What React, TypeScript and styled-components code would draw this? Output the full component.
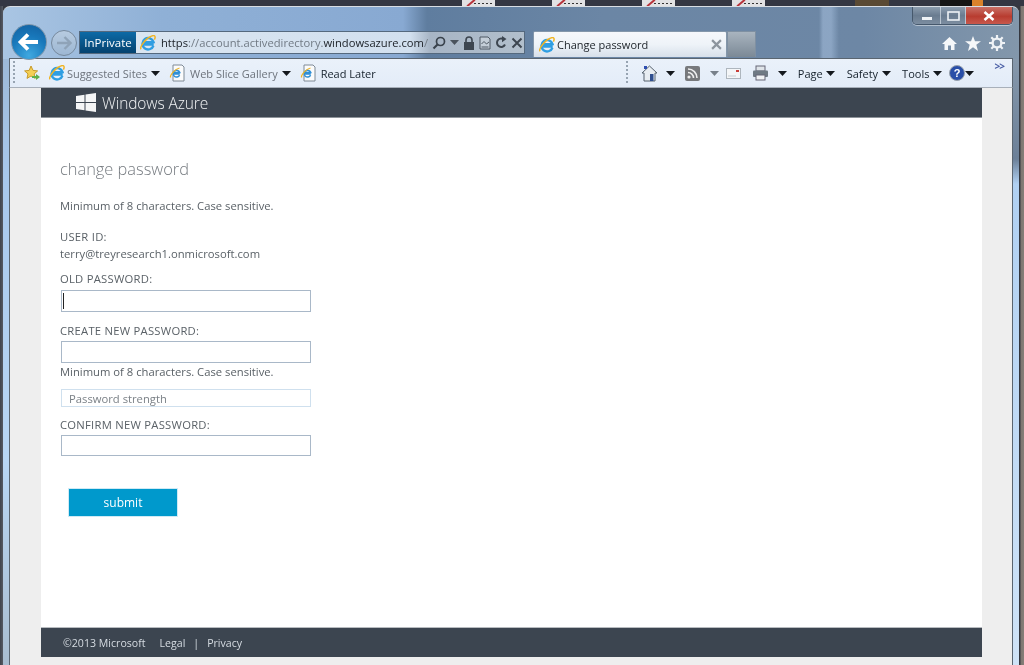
import React from "react";
import styled, { createGlobalStyle } from "styled-components";

const Global = createGlobalStyle`
  html, body { margin: 0; padding: 0; background: #3a3d48; }
  * { box-sizing: border-box; }
`;

const sans = `"Open Sans", "Noto Sans", "Liberation Sans", sans-serif`;

const Desktop = styled.div`
  width: 1024px; height: 665px; overflow: hidden; display: flex; flex-direction: column;
  background: linear-gradient(90deg, #3f434c 0, #565a63 3px, #34373f 3px, #34373f 1020px, #7d7670 1021px, #857e78 1024px);
  font-family: ${sans};
  filter: blur(0.3px);
`;
const DesktopStrip = styled.div`
  height: 6px; flex: none; display: flex; padding-left: 462px; gap: 57px;
  background: #343743;
`;
const Thumb = styled.div`
  width: 33px; height: 6px; flex: none; background: #e2e2e4; position: relative; overflow: hidden;
  &::before { content: ""; position: absolute; left: 12px; top: 3px; width: 18px; height: 1px; background: repeating-linear-gradient(90deg, #333 0 2px, transparent 2px 4px); }
  &::after { content: ""; position: absolute; left: 4px; top: 2px; width: 10px; height: 2px; background: #b8323a; transform: rotate(-40deg); }
`;
const Scrap = styled.div<{ $w: number; $ml: number; $c: string }>`
  width: ${p => p.$w}px; flex: none; margin-left: ${p => p.$ml}px; height: 6px; background: ${p => p.$c};
`;
const Window = styled.div`
  flex: 1; margin: 0 5px 0 3px; display: flex; flex-direction: column; min-height: 0;
  border-radius: 7px 7px 0 0; border-top: 1px solid #d8dde3; position: relative;
  background:
    linear-gradient(90deg, transparent 0, transparent 816px, rgba(170,195,225,.5) 820px, rgba(170,195,225,.5) 828px, transparent 836px),
    linear-gradient(90deg, #a9c5e3 0, #8fb0d6 160px, #88a9d2 400px, #5f7d9f 424px, #6b86a5 600px, #6d87a5 860px, #8397ab 1016px);
`;
const BottomGlow = styled.div`
  position: absolute; inset: 52px 0 0 0;
  background:
    linear-gradient(180deg, #9db9d8 0, #a8c8ec 120px, #b8d6f4 400px, #a9bdd0 100%) left / 50% 100% no-repeat,
    linear-gradient(180deg, #8698ab 0, #6c8098 100px, #b0d0f2 125px, #cfe3f7 100%) right / 50% 100% no-repeat;
`;
const ChromeRow = styled.div`
  height: 51px; flex: none; display: flex; align-items: flex-start; padding-left: 8px; position: relative;
`;
const Caption = styled.div`
  position: absolute; top: 0; right: 6px; width: 101px; height: 18px; display: flex;
  border: 1px solid #46586c; border-top: none; border-radius: 0 0 5px 5px; overflow: hidden;
  box-shadow: 0 1px 0 rgba(255,255,255,.45);
`;
const CapBtn = styled.div<{ $w: number; $red?: boolean }>`
  width: ${p => p.$w}px; display: flex; align-items: center; justify-content: center;
  border-right: 1px solid rgba(230,238,245,.6);
  background: ${p => p.$red
    ? "linear-gradient(180deg,#c97066 0,#b83c30 55%,#c8584c 100%)"
    : "linear-gradient(180deg,#8c9daf 0,#6a7c90 50%,#7c8da0 100%)"};
  &:last-child { border-right: none; }
`;
const BackBtn = styled.div`
  width: 36px; height: 36px; margin-top: 17px; border-radius: 50%; flex: none; display: flex; align-items: center; justify-content: center;
  background: radial-gradient(circle at 50% 90%, #3fa8e0 0, #1878bb 55%, #125f9f 100%);
  border: 1px solid #7f96ab; position: relative; z-index: 1;
`;
const FwdBtn = styled.div`
  width: 26px; height: 26px; margin: 23px 0 0 4px; border-radius: 50%; flex: none; display: flex; align-items: center; justify-content: center;
  background: linear-gradient(180deg, #b7cbe0, #9db7d3); border: 1px solid #76899d;
`;
const Address = styled.div`
  width: 446px; height: 23px; margin: 24px 0 0 2px; flex: none; display: flex; align-items: center;
  border: 1px solid #55697e; overflow: hidden;
  background: linear-gradient(90deg, #dbe6f1 0, #d2e0ef 330px, #a7b5c5 350px, #b2bfcc 100%);
`;
const Private = styled.div`
  width: 56px; height: 100%; flex: none; display: flex; align-items: center; justify-content: center;
  background: linear-gradient(180deg, #0d6aa6, #04426f); color: #fff; font-size: 11.5px;
`;
const IconGap = styled.span`
  width: 4px; flex: none;
`;
const Url = styled.div`
  width: 267px; margin-left: 5px; overflow: hidden; white-space: nowrap; font-size: 11.2px; color: #717a84; flex: none;
  & b { font-weight: 400; color: #1a1f25; }
`;
const AddrIcons = styled.div`
  display: flex; align-items: center; gap: 4px; margin-left: 4px;
`;
const Tab = styled.div`
  width: 194px; height: 26px; margin: 24px 0 0 8px; flex: none; display: flex; align-items: center; padding: 0 4px 0 5px;
  background: linear-gradient(180deg, #f6f8fb 0, #eef3f8 50%, #d7e0ea 100%);
  border: 1px solid #8497aa; border-bottom: none; border-radius: 2px 2px 0 0;
`;
const TabTitle = styled.span`
  font-size: 11px; color: #1c2228; margin-left: 2px; flex: 1;
`;
const NewTab = styled.div`
  width: 29px; height: 26px; margin-top: 24px; flex: none;
  background: linear-gradient(180deg, #a9b4bf, #7b8996); border: 1px solid #7f90a2; border-bottom: none;
`;
const RightIcons = styled.div`
  position: absolute; top: 28px; right: 14px; display: flex; gap: 8px; align-items: center;
`;
const Toolbar = styled.div`
  height: 30px; flex: none; margin: 0 6px; display: flex; align-items: center; position: relative;
  background: linear-gradient(180deg, #eaf1fa, #e3ecf8);
  border: 1px solid #5a6570; border-bottom-color: #a8b0ba;
  font-size: 11px; color: #1b2430;
`;
const Grip = styled.div<{ $ml: number }>`
  width: 2px; height: 24px; margin-left: ${p => p.$ml}px; flex: none;
  background: repeating-linear-gradient(180deg, #97a4b2 0 2px, transparent 2px 4px);
`;
const Item = styled.span<{ $ml: number; $dim?: boolean }>`
  margin-left: ${p => p.$ml}px; flex: none; display: inline-flex; align-items: center;
  color: ${p => (p.$dim ? "#6d737c" : "#15202b")}; white-space: nowrap;
`;
const More = styled.span`
  position: absolute; right: 8px; top: 1px; font-size: 10px; line-height: 12px; color: #4a5fa5; font-weight: 700; letter-spacing: -1px;
`;
const PageArea = styled.div`
  flex: 1; min-height: 0; margin: 0 6px; background: #eeeeee; padding: 0 30px 8px 31px; display: flex; flex-direction: column; position: relative;
  border-left: 1px solid #5a6570; border-right: 1px solid #5a6570;
`;
const Header = styled.header`
  height: 30px; flex: none; background: #3c4550; border-bottom: 1px solid #8e949a; display: flex; align-items: center; padding-left: 35px; color: #f2f4f5;
`;
const Brand = styled.span`
  font-size: 15.5px; margin-left: 6px; font-weight: 300; letter-spacing: -.1px;
`;
const Main = styled.main`
  flex: 1; background: #fff; padding: 40px 0 0 19px; display: flex; flex-direction: column; align-items: flex-start; color: #5a6167; font-size: 11.25px;
`;
const Title = styled.h1`
  margin: 0 0 18px; font-size: 16.4px; line-height: 22px; font-weight: 300; color: #767b80;
`;
const Line = styled.div<{ $mt?: number; $caps?: boolean }>`
  line-height: 16px; margin-top: ${p => p.$mt ?? 0}px; white-space: nowrap; letter-spacing: ${p => (p.$caps ? ".25px" : "0")};
`;
const Field = styled.div<{ $mt: number; $h: number; $weak?: boolean }>`
  width: 250px; height: ${p => p.$h}px; margin: ${p => p.$mt}px 0 0 1px; background: #fff; display: flex; align-items: center;
  border: 1px solid ${p => (p.$weak ? "#cfe0ee" : "#a9b8c8")}; padding-left: 7px; color: #7b8187;
`;
const Caret = styled.div`
  width: 1px; height: 16px; background: #222; margin-left: -6px;
`;
const Submit = styled.button`
  width: 110px; height: 29px; margin: 32px 0 0 8px; background: #0099cc; border: 1px solid #cfeaf5; color: #fff; font: 400 12px ${sans}; padding: 0;
`;
const Footer = styled.footer`
  height: 30px; flex: none; background: #3c4550; border-top: 1px solid #b8bcc0; display: flex; align-items: center; padding-left: 22px; color: #d6dce2; font-size: 10.6px;
`;
const FootItem = styled.span<{ $ml?: number }>`
  margin-left: ${p => p.$ml ?? 0}px;
`;

const IeIcon = ({ s = 16 }: { s?: number }) => (
  <svg width={s} height={s} viewBox="1 1 14 14" style={{ flex: "none" }}>
    <path d="M12.8 10.4A5 5 0 1 1 12.9 7.2H4.4M4.3 9.3H13" fill="none" stroke="#2f9ee2" strokeWidth="2" />
    <path d="M2 13.5C.2 12 5.8 4 11 2c3-1.2 4 .2 2.6 3" fill="none" stroke="#f0b422" strokeWidth="1.3" />
  </svg>
);
const PageIe = () => (
  <svg width="16" height="18" viewBox="0 0 16 18" style={{ flex: "none" }}>
    <path d="M4 1h9l2 2v14H4z" fill="#fafbfc" stroke="#7f8a96" />
    <path d="M10.6 11.2A3.4 3.4 0 1 1 10.8 8.6H4.8M4.8 10H10.8" fill="none" stroke="#2f8fd6" strokeWidth="1.5" />
    <path d="M1.5 13.5C1 11 6 5 10.5 4" fill="none" stroke="#f0b422" strokeWidth="1.2" />
  </svg>
);
const Down = ({ c = "#14181d" }: { c?: string }) => (
  <svg width="9" height="5" viewBox="0 0 9 5" style={{ flex: "none" }}><path d="M0 0h9L4.5 5z" fill={c} /></svg>
);

export default function App() {
  return (
    <Desktop>
      <Global />
      <DesktopStrip>
        <Thumb /><Thumb /><Thumb /><Thumb />
        <Scrap $w={34} $ml={33} $c="#5a4a34" />
        <Scrap $w={32} $ml={-6} $c="#151515" />
        <Scrap $w={11} $ml={-57} $c="#d9822b" />
      </DesktopStrip>
      <Window>
        <BottomGlow />
        <ChromeRow>
          <BackBtn>
            <svg width="24" height="20" viewBox="0 0 24 20"><path d="M11 2.5 3.5 10l7.5 7.5M4 10h17" fill="none" stroke="#fff" strokeWidth="3.8" strokeLinejoin="miter" /></svg>
          </BackBtn>
          <FwdBtn>
            <svg width="18" height="16" viewBox="0 0 18 16"><path d="M9.5 2 15.5 8l-6 6M15 8H2" fill="none" stroke="#8fa3b8" strokeWidth="2.4" /></svg>
          </FwdBtn>
          <Address>
            <Private>InPrivate</Private>
            <IconGap />
            <IeIcon />
            <Url><b>https</b>://account.activedirectory.<b>windowsazure.com</b>/</Url>
            <AddrIcons>
              <svg width="14" height="14" viewBox="0 0 14 14"><circle cx="8.5" cy="5.5" r="4" fill="none" stroke="#39424c" strokeWidth="1.7" /><path d="M5.5 8.5 1.5 12.5" stroke="#39424c" strokeWidth="2.2" /></svg>
              <Down c="#4a535d" />
              <svg width="12" height="14" viewBox="0 0 12 14"><path d="M3 6V4a3 3 0 0 1 6 0v2" fill="none" stroke="#3d4650" strokeWidth="1.6" /><rect x="1" y="6" width="10" height="8" fill="#3d4650" /></svg>
              <svg width="12" height="14" viewBox="0 0 12 14"><path d="M1 1h8l2 2v10H1z" fill="#c4ced8" stroke="#4f5964" /><path d="M2.5 8 5 5.5 7.5 8 10 6M2.5 11h7" fill="none" stroke="#4f5964" /></svg>
              <svg width="12" height="13" viewBox="0 0 12 13"><path d="M10 8.5A4.2 4.2 0 1 1 8.5 3.2" fill="none" stroke="#3d4650" strokeWidth="2" /><path d="M7 0v6.2L11.5 3z" fill="#3d4650" /></svg>
              <svg width="12" height="12" viewBox="0 0 12 12"><path d="M1.5 1.5l9 9M10.5 1.5l-9 9" stroke="#3d4650" strokeWidth="2" /></svg>
            </AddrIcons>
          </Address>
          <Tab>
            <IeIcon />
            <TabTitle>Change password</TabTitle>
            <svg width="11" height="11" viewBox="0 0 10 10"><path d="M1 1l8 8M9 1l-8 8" stroke="#8d959e" strokeWidth="2" /></svg>
          </Tab>
          <NewTab />
          <Caption>
            <CapBtn $w={29}><svg width="12" height="10" viewBox="0 0 12 10"><rect x="1" y="6" width="10" height="3" fill="#eef2f6" /></svg></CapBtn>
            <CapBtn $w={25}><svg width="13" height="10" viewBox="0 0 13 10"><rect x="1" y="1" width="11" height="8" fill="none" stroke="#eef2f6" strokeWidth="1.6" /></svg></CapBtn>
            <CapBtn $w={47} $red><svg width="12" height="10" viewBox="0 0 12 10"><path d="M1.5 1l9 8M10.5 1l-9 8" stroke="#fff" strokeWidth="2.6" /></svg></CapBtn>
          </Caption>
          <RightIcons>
            <svg width="15" height="15" viewBox="0 0 15 15"><path d="M7.5 1 0 8h2.5v6h3.5V9.5h3V14h3.5V8H15z" fill="#f5f7f9" /></svg>
            <svg width="16" height="15" viewBox="0 0 16 15"><path d="M8 0l2 5.3h6l-4.7 3.5L13 15 8 11.3 3 15l1.7-6.2L0 5.3h6z" fill="#f5f7f9" /></svg>
            <svg width="16" height="16" viewBox="0 0 16 16"><circle cx="8" cy="8" r="4.4" fill="none" stroke="#f0f3f6" strokeWidth="2.4" /><path d="M8 0v3M8 13v3M0 8h3M13 8h3M2.3 2.3l2.2 2.2M11.5 11.5l2.2 2.2M13.7 2.3l-2.2 2.2M4.5 11.5l-2.2 2.2" stroke="#f0f3f6" strokeWidth="2.2" /></svg>
          </RightIcons>
        </ChromeRow>
        <Toolbar>
          <Grip $ml={3} />
          <Item $ml={9}>
            <svg width="16" height="16" viewBox="0 0 16 16"><path d="M7 1l2 4.4 4.6.5-3.4 3 1 4.5L7 11 3 13.4l1-4.5L.6 5.9l4.6-.5z" fill="#f4cf55" stroke="#c79a2a" /><path d="M8 11h4V9l4 3-4 3v-2H8z" fill="#5fb04a" /></svg>
          </Item>
          <Item $ml={9}><IeIcon /></Item>
          <Item $ml={2} $dim>Suggested Sites</Item>
          <Item $ml={4}><Down /></Item>
          <Item $ml={9}><PageIe /></Item>
          <Item $ml={5} $dim>Web Slice Gallery</Item>
          <Item $ml={4}><Down /></Item>
          <Item $ml={9}><PageIe /></Item>
          <Item $ml={5}>Read Later</Item>
          <Grip $ml={250} />
          <Item $ml={13}>
            <svg width="17" height="17" viewBox="0 0 17 17"><path d="M8.5 1 1 8h2v8h11V8h2z" fill="#e8edf2" stroke="#56626e" /><rect x="9" y="9" width="3.5" height="7" fill="#2f4f8f" /><path d="M3 1h3v3H3z" fill="#2f4fb0" /></svg>
          </Item>
          <Item $ml={8}><Down /></Item>
          <Item $ml={10}>
            <svg width="15" height="15" viewBox="0 0 15 15"><rect width="15" height="15" rx="2" fill="#77797c" /><circle cx="4" cy="11" r="1.6" fill="#eee" /><path d="M3 6.5A5.5 5.5 0 0 1 8.5 12M3 3a9 9 0 0 1 9 9" fill="none" stroke="#eee" strokeWidth="1.6" /></svg>
          </Item>
          <Item $ml={10}><Down c="#77808a" /></Item>
          <Item $ml={7}>
            <svg width="15" height="11" viewBox="0 0 15 11"><rect x=".5" y=".5" width="14" height="10" fill="#f4f6f8" stroke="#aeb6be" /><rect x="10" y="2" width="3" height="2" fill="#c9403a" /><path d="M2 8h8" stroke="#c5ccd3" /></svg>
          </Item>
          <Item $ml={11}>
            <svg width="17" height="16" viewBox="0 0 17 16"><rect x="4" y="1" width="9" height="5" fill="#dfe4e9" stroke="#667" /><rect x="1" y="5.5" width="15" height="6.5" rx="1" fill="#6f7a84" /><rect x="4" y="10" width="9" height="5" fill="#f0f2f4" stroke="#667" /></svg>
          </Item>
          <Item $ml={9}><Down /></Item>
          <Item $ml={11}>Page</Item>
          <Item $ml={3}><Down /></Item>
          <Item $ml={12}>Safety</Item>
          <Item $ml={4}><Down /></Item>
          <Item $ml={11}>Tools</Item>
          <Item $ml={4}><Down /></Item>
          <Item $ml={7}>
            <svg width="16" height="16" viewBox="0 0 16 16"><circle cx="8" cy="8" r="7.5" fill="#2a4fa8" stroke="#9aa3ad" /><text x="8" y="12" textAnchor="middle" fontSize="11" fontWeight="700" fill="#fff" fontFamily="Liberation Sans">?</text></svg>
          </Item>
          <Item $ml={0}><Down /></Item>
          <More>&gt;&gt;</More>
        </Toolbar>
        <PageArea>
          <Header>
            <svg width="20" height="19" viewBox="0 0 20 19"><path d="M0 3l8.5-1.3V9H0zM9.5 1.5 20 0v9H9.5zM0 10h8.5v7.3L0 16zM9.5 10H20v9L9.5 17.5z" fill="#f4f5f6" /></svg>
            <Brand>Windows Azure</Brand>
          </Header>
          <Main>
            <Title>change password</Title>
            <Line>Minimum of 8 characters. Case sensitive.</Line>
            <Line $mt={15} $caps>USER ID:</Line>
            <Line $mt={1}>terry@treyresearch1.onmicrosoft.com</Line>
            <Line $mt={9} $caps>OLD PASSWORD:</Line>
            <Field $mt={3} $h={22}><Caret /></Field>
            <Line $mt={11} $caps>CREATE NEW PASSWORD:</Line>
            <Field $mt={2} $h={22} />
            <Line $mt={1}>Minimum of 8 characters. Case sensitive.</Line>
            <Field $mt={9} $h={18} $weak>Password strength</Field>
            <Line $mt={10} $caps>CONFIRM NEW PASSWORD:</Line>
            <Field $mt={2} $h={21} />
            <Submit>submit</Submit>
          </Main>
          <Footer>
            <span>©2013 Microsoft</span>
            <FootItem $ml={14}>Legal</FootItem>
            <FootItem $ml={8}>|</FootItem>
            <FootItem $ml={8}>Privacy</FootItem>
          </Footer>
        </PageArea>
      </Window>
    </Desktop>
  );
}
